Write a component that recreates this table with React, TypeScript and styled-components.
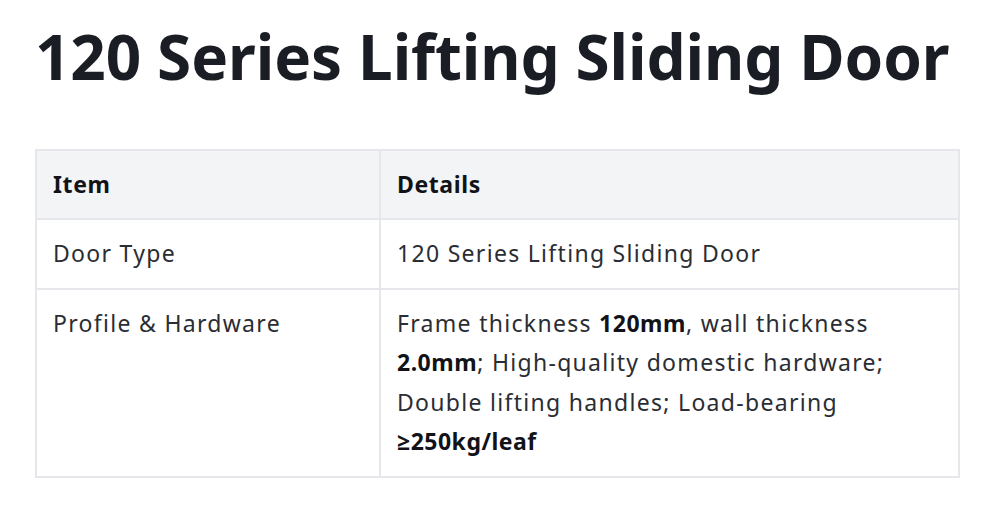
import React from 'react'
import styled, { createGlobalStyle } from 'styled-components'

const GlobalStyle = createGlobalStyle`
  html, body {
    margin: 0;
    padding: 0;
    background: #ffffff;
  }
  body {
    font-family: "Noto Sans", "Open Sans", Arial, sans-serif;
    color: #1f2328;
  }
`

const Page = styled.div`
  padding: 14px 35px 0 35px;
  width: 924px;
`

const Title = styled.h1`
  margin: 0;
  font-size: 62px;
  line-height: 84px;
  font-weight: 700;
  color: #1a1d24;
  letter-spacing: -0.1px;
`

const Table = styled.table`
  margin-top: 51px;
  width: 923px;
  table-layout: fixed;
  border-collapse: collapse;
  font-size: 23px;
  line-height: 39.5px;
  letter-spacing: 1.3px;
  color: #2a2d33;
`

const HeadCell = styled.th<{ wide?: boolean }>`
  box-sizing: border-box;
  width: ${props => props.wide ? '579px' : '344px'};
  background: #f3f4f6;
  border: 2px solid #e5e7eb;
  padding: 14px 16px;
  line-height: 39px;
  text-align: left;
  font-weight: 700;
  color: #111318;
  letter-spacing: 0.6px;
`

const Cell = styled.td`
  border: 2px solid #e5e7eb;
  padding: 14px 16px;
  vertical-align: top;
`

const Strong = styled.b`
  font-weight: 700;
  color: #111318;
  letter-spacing: 0.5px;
`

type IRow = {
  item: string
  details: React.ReactNode
}

const rows: Array<IRow> = [
  { item: 'Door Type', details: '120 Series Lifting Sliding Door' },
  {
    item: 'Profile & Hardware',
    details: (
      <>
        Frame thickness <Strong>120mm</Strong>, wall thickness <Strong>2.0mm</Strong>; High-quality domestic hardware;
        Double lifting handles; Load-bearing <Strong>≥250kg/leaf</Strong>
      </>
    )
  }
]

function App() {
  return (
    <Page>
      <GlobalStyle />
      <Title>120 Series Lifting Sliding Door</Title>
      <Table>
        <thead>
          <tr>
            <HeadCell>Item</HeadCell>
            <HeadCell wide>Details</HeadCell>
          </tr>
        </thead>
        <tbody>
          {rows.map((row, i) => (
            <tr key={i}>
              <Cell>{row.item}</Cell>
              <Cell>{row.details}</Cell>
            </tr>
          ))}
        </tbody>
      </Table>
    </Page>
  )
}

export default App
